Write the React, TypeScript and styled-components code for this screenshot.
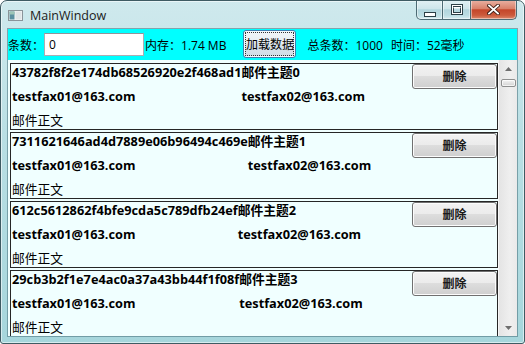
import React from "react";
import styled, { createGlobalStyle } from "styled-components";

const Global = createGlobalStyle`
  html, body { margin: 0; padding: 0; background: #ffffff; }
  body { font-family: "Open Sans", "Noto Sans CJK SC", sans-serif; }
  * { box-sizing: border-box; }
`;

const FONT = `"Open Sans", "Noto Sans CJK SC", sans-serif`;

const Window = styled.div`
  width: 525px;
  height: 344px;
  border: 1px solid #3e5b63;
  border-radius: 7px 7px 3px 3px;
  background: linear-gradient(180deg, #cfe9ed 0%, #b9dfe4 40%, #a6d6dc 100%);
  padding: 0 7px 7px 7px;
  display: flex;
  flex-direction: column;
  overflow: hidden;
  box-shadow: inset 0 0 0 1px rgba(255, 255, 255, 0.55);
`;

const TitleBar = styled.div`
  height: 28px;
  display: flex;
  align-items: flex-start;
  flex-shrink: 0;
`;

const TitleLeft = styled.div`
  height: 28px;
  display: flex;
  align-items: center;
  gap: 7px;
  flex: 1;
`;

const TitleText = styled.span`
  font-family: ${FONT};
  font-size: 12.5px;
  color: #1b1b1b;
  margin-top: 1px;
`;

const Captions = styled.div`
  display: flex;
  margin-top: -1px;
  margin-right: 0px;
`;

const CapButton = styled.div<{ $kind: "min" | "max" | "close" }>`
  width: ${(p) => (p.$kind === "close" ? 47 : 27)}px;
  height: 20px;
  border: 1px solid #4d6b74;
  border-top: none;
  ${(p) => (p.$kind === "max" ? "border-left: none; border-right: none;" : "")}
  border-radius: ${(p) =>
    p.$kind === "min" ? "0 0 0 5px" : p.$kind === "close" ? "0 0 5px 0" : "0"};
  background: ${(p) =>
    p.$kind === "close"
      ? "linear-gradient(180deg, #e9b3a5 0%, #d9826b 45%, #c4462a 52%, #cc5a3c 80%, #dc8a6d 100%)"
      : "linear-gradient(180deg, #e3f1f4 0%, #cfe6eb 45%, #b2d6de 52%, #bcdde3 80%, #d6ecf0 100%)"};
  box-shadow: inset 0 0 0 1px rgba(255, 255, 255, 0.45);
  display: flex;
  align-items: center;
  justify-content: center;
`;

const Client = styled.div`
  flex: 1;
  display: flex;
  flex-direction: column;
  min-height: 0;
  box-shadow: 0 0 0 1px rgba(70, 110, 120, 0.55);
`;

const Toolbar = styled.div`
  height: 31px;
  flex-shrink: 0;
  background: #00ffff;
  display: flex;
  align-items: center;
  font-family: ${FONT};
  font-size: 12px;
  color: #000;
`;

const Label = styled.span<{ $ml?: number }>`
  margin-left: ${(p) => p.$ml ?? 0}px;
  white-space: nowrap;
`;

const Input = styled.div`
  width: 100px;
  height: 23px;
  margin-left: 0px;
  background: #ffffff;
  border: 1px solid #abadb3;
  border-top-color: #8f9399;
  padding-left: 4px;
  display: flex;
  align-items: center;
  font-size: 12px;
`;

const LoadButton = styled.div`
  width: 53px;
  height: 28px;
  margin-left: 17px;
  margin-top: -1px;
  border: 1px solid #3c7fb1;
  border-radius: 3px;
  background: linear-gradient(180deg, #f2f6f9 0%, #e6edf2 50%, #d8e3eb 50%, #cfdce6 100%);
  box-shadow: inset 0 0 0 1px #f4f9fc;
  display: flex;
  align-items: center;
  justify-content: center;
  font-size: 12px;
  outline: 1px dotted #333;
  outline-offset: -3px;
`;

const Body = styled.div`
  flex: 1;
  display: flex;
  min-height: 0;
`;

const List = styled.div`
  flex: 1;
  background: #f0ffff;
  padding: 3px 0 0 2px;
  display: flex;
  flex-direction: column;
  gap: 2px;
  overflow: hidden;
`;

const Item = styled.div`
  flex-shrink: 0;
  height: 67px;
  border: 1px solid #262626;
  background: #f0ffff;
  padding-left: 1px;
  display: grid;
  grid-template-columns: auto auto 1fr auto;
  grid-template-rows: 17px 17px 17px;
  row-gap: 7px;
  font-family: ${FONT};
  font-size: 12.75px;
  line-height: 17px;
  color: #000;
`;

const Cell = styled.div<{ $col: number; $row: number; $bold?: boolean }>`
  grid-column: ${(p) => p.$col};
  grid-row: ${(p) => p.$row};
  font-weight: ${(p) => (p.$bold ? 700 : 400)};
  white-space: nowrap;
`;

const DeleteButton = styled.div`
  grid-column: 4;
  grid-row: 1 / span 2;
  align-self: start;
  width: 85px;
  height: 25px;
  margin-top: 0px;
  border: 1px solid #707070;
  border-radius: 3px;
  background: linear-gradient(180deg, #f2f2f2 0%, #ebebeb 50%, #dddddd 50%, #cfcfcf 100%);
  box-shadow: inset 0 0 0 1px #fcfcfc;
  display: flex;
  align-items: center;
  justify-content: center;
  font-size: 12px;
  font-weight: 700;
  color: #1a1a1a;
`;

const ScrollBar = styled.div`
  width: 19px;
  flex-shrink: 0;
  background: linear-gradient(90deg, #e4e4e4 0%, #efefef 60%, #eaeaea 100%);
  border-left: 1px solid #f7f7f7;
  display: flex;
  flex-direction: column;
  align-items: center;
`;

const ArrowBox = styled.div`
  height: 17px;
  width: 100%;
  display: flex;
  align-items: center;
  justify-content: center;
  flex-shrink: 0;
`;

const Thumb = styled.div`
  width: 15px;
  height: 8px;
  margin-top: 2px;
  border: 1px solid #8e8f8f;
  border-radius: 2px;
  background: linear-gradient(180deg, #f6f6f6 0%, #e3e3e3 50%, #d2d2d2 100%);
  box-shadow: inset 0 0 0 1px rgba(255, 255, 255, 0.7);
`;

const Spacer = styled.div`
  flex: 1;
`;

const AppIcon = () => (
  <svg width="15" height="11" viewBox="0 0 15 11">
    <rect x="0.5" y="0.5" width="14" height="10" fill="#f4f6f7" stroke="#8a9499" />
    <rect x="1.5" y="1.5" width="5" height="8" fill="#5b8fa0" />
    <rect x="1.5" y="1.5" width="5" height="3" fill="#9cc4b6" />
    <rect x="7.5" y="1.5" width="6" height="8" fill="#dfe4e6" />
  </svg>
);

const MinGlyph = () => (
  <svg width="14" height="16" viewBox="0 0 14 16">
    <rect x="1.5" y="10.5" width="11" height="4" fill="#ffffff" stroke="#2c3f46" />
  </svg>
);

const MaxGlyph = () => (
  <svg width="12" height="12" viewBox="0 0 12 12">
    <rect x="1.5" y="1.5" width="9" height="8" fill="none" stroke="#2c3f46" strokeWidth="3" />
    <rect x="1.5" y="1.5" width="9" height="8" fill="none" stroke="#ffffff" strokeWidth="1" />
    <rect x="2.5" y="3" width="7" height="1.2" fill="#ffffff" />
  </svg>
);

const CloseGlyph = () => (
  <svg width="13" height="11" viewBox="0 0 13 11">
    <path d="M2 1.5 L11 9.5 M11 1.5 L2 9.5" stroke="#3b1d14" strokeWidth="3.6" strokeLinecap="square" />
    <path d="M2 1.5 L11 9.5 M11 1.5 L2 9.5" stroke="#ffffff" strokeWidth="1.8" strokeLinecap="square" />
  </svg>
);

const UpArrow = () => (
  <svg width="7" height="4" viewBox="0 0 7 4">
    <path d="M3.5 0 L7 4 L0 4 Z" fill="#6e6e6e" />
  </svg>
);

const DownArrow = () => (
  <svg width="7" height="4" viewBox="0 0 7 4">
    <path d="M0 0 L7 0 L3.5 4 Z" fill="#6e6e6e" />
  </svg>
);

const mails = [
  { id: "43782f8f2e174db68526920e2f468ad1", subject: "邮件主题0" },
  { id: "7311621646ad4d7889e06b96494c469e", subject: "邮件主题1" },
  { id: "612c5612862f4bfe9cda5c789dfb24ef", subject: "邮件主题2" },
  { id: "29cb3b2f1e7e4ac0a37a43bb44f1f08f", subject: "邮件主题3" },
];

export default function App() {
  return (
    <>
      <Global />
      <Window>
        <TitleBar>
          <TitleLeft>
            <AppIcon />
            <TitleText>MainWindow</TitleText>
          </TitleLeft>
          <Captions>
            <CapButton $kind="min">
              <MinGlyph />
            </CapButton>
            <CapButton $kind="max">
              <MaxGlyph />
            </CapButton>
            <CapButton $kind="close">
              <CloseGlyph />
            </CapButton>
          </Captions>
        </TitleBar>
        <Client>
          <Toolbar>
            <Label>条数：</Label>
            <Input>0</Input>
            <Label $ml={1}>内存：1.74 MB</Label>
            <LoadButton>加载数据</LoadButton>
            <Label $ml={11}>总条数：1000</Label>
            <Label $ml={8}>时间：52毫秒</Label>
          </Toolbar>
          <Body>
            <List>
              {mails.map((m) => (
                <Item key={m.id}>
                  <Cell $col={1} $row={1} $bold>
                    {m.id}
                  </Cell>
                  <Cell $col={2} $row={1} $bold>
                    {m.subject}
                  </Cell>
                  <Cell $col={1} $row={2} $bold>
                    testfax01@163.com
                  </Cell>
                  <Cell $col={2} $row={2} $bold>
                    testfax02@163.com
                  </Cell>
                  <Cell $col={1} $row={3}>
                    邮件正文
                  </Cell>
                  <DeleteButton>删除</DeleteButton>
                </Item>
              ))}
            </List>
            <ScrollBar>
              <ArrowBox>
                <UpArrow />
              </ArrowBox>
              <Thumb />
              <Spacer />
              <ArrowBox>
                <DownArrow />
              </ArrowBox>
            </ScrollBar>
          </Body>
        </Client>
      </Window>
    </>
  );
}
